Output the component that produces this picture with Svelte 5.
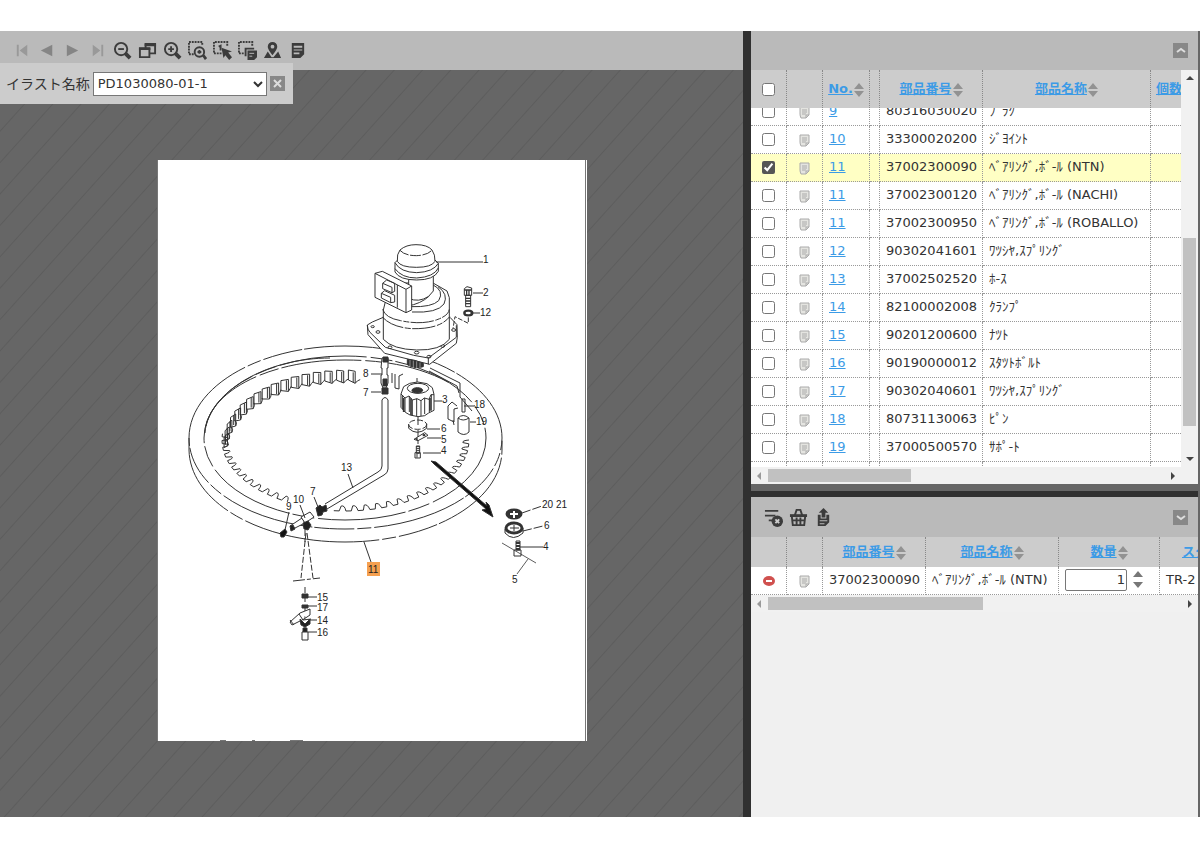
<script>
  import { onMount } from 'svelte';

  let illustration = 'PD1030080-01-1';
  let quantity = 1;
  let scroller;

  let parts = [
    { no: 9, code: '80316030020', name: 'ﾌﾟﾗｸ', checked: false },
    { no: 10, code: '33300020200', name: 'ｼﾞﾖｲﾝﾄ', checked: false },
    { no: 11, code: '37002300090', name: 'ﾍﾞｱﾘﾝｸﾞ,ﾎﾞ-ﾙ (NTN)', checked: true },
    { no: 11, code: '37002300120', name: 'ﾍﾞｱﾘﾝｸﾞ,ﾎﾞ-ﾙ (NACHI)', checked: false },
    { no: 11, code: '37002300950', name: 'ﾍﾞｱﾘﾝｸﾞ,ﾎﾞ-ﾙ (ROBALLO)', checked: false },
    { no: 12, code: '90302041601', name: 'ﾜﾂｼﾔ,ｽﾌﾟﾘﾝｸﾞ', checked: false },
    { no: 13, code: '37002502520', name: 'ﾎ-ｽ', checked: false },
    { no: 14, code: '82100002008', name: 'ｸﾗﾝﾌﾟ', checked: false },
    { no: 15, code: '90201200600', name: 'ﾅﾂﾄ', checked: false },
    { no: 16, code: '90190000012', name: 'ｽﾀﾂﾄﾎﾞﾙﾄ', checked: false },
    { no: 17, code: '90302040601', name: 'ﾜﾂｼﾔ,ｽﾌﾟﾘﾝｸﾞ', checked: false },
    { no: 18, code: '80731130063', name: 'ﾋﾟﾝ', checked: false },
    { no: 19, code: '37000500570', name: 'ｻﾎﾟ-ﾄ', checked: false },
  ];

  // callout numbers on the drawing
  const callouts = [
    ['1', 483, 263], ['2', 483, 296], ['12', 480, 316], ['8', 363, 377],
    ['7', 363, 396], ['3', 442, 403], ['18', 474, 408], ['19', 476, 425],
    ['6', 441, 432], ['5', 441, 443], ['4', 441, 454], ['13', 341, 471],
    ['7', 310, 495], ['10', 293, 503], ['9', 286, 510], ['15', 317, 601],
    ['17', 317, 611], ['14', 317, 624], ['16', 317, 636], ['20 21', 542, 508],
    ['6', 544, 529], ['4', 543, 550], ['5', 512, 583],
  ];

  const at = (deg, rx, ry) => {
    const t = (deg * Math.PI) / 180;
    return [345 + rx * Math.cos(t), 440 + ry * Math.sin(t)].map((v) => v.toFixed(1));
  };

  // scalloped inner gear edge along the ring
  function teeth(from, to, step, rx, ry) {
    let d = 'M' + at(from, rx, ry).join(' ');
    for (let a = from; a < to; a += step) {
      d += 'Q' + at(a + step * 0.1, rx - 7, ry - 6).join(' ') + ' ' + at(a + step * 0.4, rx - 6, ry - 5).join(' ');
      d += 'L' + at(a + step * 0.55, rx, ry).join(' ') + 'L' + at(a + step, rx, ry).join(' ');
    }
    return d;
  }

  // upright faces of the teeth at the back of the ring
  function walls(from, to, step) {
    let d = '';
    for (let a = from; a < to; a += step) {
      const [x1, y1] = at(a, 121, 70);
      const [x2, y2] = at(a + step * 0.6, 118, 69);
      const [x3, y3] = at(a + step, 121, 70);
      d += `M${x1} ${y1}L${x2} ${y2}v12L${x1} ${+y1 + 10}Z`;
      d += `M${x2 - 2} ${+y2 + 1}v10M${x2} ${+y2 + 12}q2-3 ${(x3 - x2).toFixed(1)} ${(y3 - y2 - 3).toFixed(1)}`;
    }
    return d;
  }

  const frontTeeth = teeth(0, 92, 5.6, 124, 71);
  const sideTeeth = teeth(118, 180, 5.6, 123, 70);
  const backTeeth = walls(182, 272, 5.6);

  onMount(() => {
    scroller.scrollTop = 10;
  });
</script>

{#snippet sortIcon()}
  <svg class="sort" viewBox="0 0 10 16" aria-hidden="true"><path d="M0 7l5-6 5 6zM0 9h10l-5 6z" /></svg>
{/snippet}

{#snippet noteIcon()}
  <svg class="note" viewBox="0 0 12 14" aria-hidden="true">
    <path d="M1 2h9v8l-3 3H2q-1-2-1-4z" fill="#e4e4e0" stroke="#aaa" />
    <path d="M3 5h5M3 7h5M3 9h4M7 13v-3h3" stroke="#aaa" fill="none" />
  </svg>
{/snippet}

<div class="viewer">
  <section class="illustration">
    <div class="toolbar">
      <button class="off" aria-label="First"><svg viewBox="0 0 20 20"><path d="M4 4h2v12H4zM15 4v12l-8-6z" /></svg></button>
      <button class="off dim" aria-label="Previous"><svg viewBox="0 0 20 20"><path d="M15 4v12L3 10z" /></svg></button>
      <button class="off dim" aria-label="Next"><svg viewBox="0 0 20 20"><path d="M4 4v12l12-6z" /></svg></button>
      <button class="off" aria-label="Last"><svg viewBox="0 0 20 20"><path d="M14 4h2v12h-2zM5 4v12l8-6z" /></svg></button>
      <button aria-label="Zoom out"><svg class="line" viewBox="0 0 20 20"><circle cx="8.500" cy="8.500" r="6.500" /><path d="M5.500 8.500h6" /><path d="M13 13l5 5" stroke-width="4" /></svg></button>
      <button aria-label="Fit"><svg class="line" viewBox="0 0 20 20"><path d="M2 8h10v9H2zM8 7V3h10v10h-6" /><path d="M7 4h12M1 8h12" stroke-width="3" /></svg></button>
      <button aria-label="Zoom in"><svg class="line" viewBox="0 0 20 20"><circle cx="8.500" cy="8.500" r="6.500" /><path d="M5.500 8.500h6M8.500 5.500v6" /><path d="M13 13l5 5" stroke-width="4" /></svg></button>
      <button aria-label="Zoom area"><svg class="line" viewBox="0 0 20 20"><path d="M6 14H1V1h14v4" stroke-dasharray="2 1" /><circle cx="12" cy="11.500" r="5" /><path d="M10 11.500h4M12 9.500v4" /><path d="M16 15l3 4" stroke-width="3" /></svg></button>
      <button aria-label="Select part"><svg class="line" viewBox="0 0 20 20"><path d="M9 13H1V1h14v5" stroke-dasharray="2 1" /><path d="M6 6l2-1v5" /><path d="M9 7l11 4-4 1 4 5-3 3-4-5-2 3z" fill="#3c3c3c" stroke="none" /></svg></button>
      <button aria-label="Copy area"><svg class="line" viewBox="0 0 20 20"><path d="M6 13H1V1h14v4" stroke-dasharray="2 1" /><path d="M8 16V8h9" /><path d="M10 10h10v7l-3 3h-7z" fill="#3c3c3c" stroke="none" /><path d="M12 13h5M12 16h3" stroke="#bababa" stroke-width="1" /></svg></button>
      <button aria-label="Location"><svg viewBox="0 0 20 20"><path fill-rule="evenodd" d="M10 1a5 5 0 0 1 5 5c0 3-5 9-5 9S5 9 5 6a5 5 0 0 1 5-5zm0 3a2 2 0 1 0 0 4 2 2 0 0 0 0-4z" /><path d="M5 11l-4 7h18l-3-7-5 6H9z" /></svg></button>
      <button aria-label="Notes"><svg viewBox="0 0 20 20"><path fill-rule="evenodd" d="M4 2h13v12l-4 4H4zM6 5v2h9V5zm0 4v1h9V9zm0 3v2h6v-2z" /></svg></button>
    </div>
    <div class="name-bar">
      <label for="illust">イラスト名称</label>
      <select id="illust" bind:value={illustration}>
        <option>PD1030080-01-1</option>
      </select>
      <button class="square" aria-label="Close"><svg viewBox="0 0 15 15"><path d="M4 4l7 7M11 4l-7 7" /></svg></button>
    </div>

    <div class="stage">
      <svg class="paper" viewBox="157 160 430 581" role="img" aria-label="Parts drawing">
        <rect x="157" y="160" width="430" height="581" fill="#fff" />
        <path d="M157.500 160V741M585.500 160V741M220 740.500h6M252 740.500h3M290 740.500h13" stroke="#777" />

        <g class="ink">
          <!-- ring -->
          <path d="M189 438C189 387 259 346 345 346S502 387 502 438S432 529 345 529S189 489 189 438V450C190 502 260 542 345 542S502 502 502 450V438" stroke-dasharray="95 3 14 3 40 2" />
          <ellipse cx="345" cy="438" rx="141" ry="82" stroke-dasharray="88 4 22 3" />
          <path d="M205 433C207 392 268 360 345 360C386 360 420 367 448 382" stroke-dasharray="80 4 20 3" />
          <path d="M206 426C215 388 270 358 330 358" />
          <path d={frontTeeth} />
          <path d={sideTeeth} />
          <path d={backTeeth} />
          <path d="M392 373v10M395 374v14l4 1v-13l4-2M448 406v13l6 3v-13l4-1M448 406l4-4 5 4M453 420l1 5" />

          <!-- hose and fittings -->
          <path d="M382 400V466Q382 470 378 472L325 504M388 400V469Q388 473 384 475L327 509M382 400q3-5 6 0" fill="#fff" />
          <path d="M382 358h6v10h-1v7h1v8l-2 5h-3l-2-5v-8h1v-7h-1z" fill="#fff" />
          <path d="M383 357h5v5h-5zM382 388h6v6h-6zM383 379h4v7h-4z" fill="#333" />
          <path d="M290 526l12-8 3 5-12 6z" fill="#fff" />
          <path d="M301 517l9-5 4 5-9 6z" fill="#fff" />
          <path d="M316 508l4-3 2 2 4-2 1 6-4 1-1 3-4 1zM290 526l3-1 2 4-4 2zM303 523l5-2 3 4-3 5-4-1z" fill="#222" />
          <path d="M280 533l5-4 2 3-3 5h-3z" fill="#111" />
          <path d="M306 533l-5 45M307 533l6 45M305 530v12" stroke-dasharray="6 2" />
          <path d="M293 581l27-3" stroke-dasharray="12 2 4 2" />
          <path d="M305 587v54" stroke-dasharray="6 3" />
          <path d="M302 594h6v4h-6zM302 605h6v3h-6z" fill="#333" />
          <path d="M290 622l10-9 10-4v6l-6 4-12 6zM299 614l4 6 8-1" fill="#fff" />
          <path d="M300 619l5 5 5-5v5l-5 3-4-2zM303 628h4v4h-4z" fill="#222" />
          <path d="M302 632h6v8h-6zM290 620l4 5" fill="#fff" />

          <!-- pin and support -->
          <path d="M429 371l28 15 2 7M430 368l30 15v14l12 14" />
          <path d="M462 399h3v13h-3z" />
          <path d="M458 418q5-5 11 0v14q-5 5-11 0zM458 418q5 4 11 0" fill="#fff" />

          <!-- pinion -->
          <path d="M417 378v6M418 413v12M418 430v14" />
          <g transform="translate(340 340) scale(.3333)" stroke-width="3">
            <path d="M183 162l8-22 18-10 24-4 28 5 16 12 5 20v48l-16 8-12 8-20 3-24-5-14-8-13-15z" fill="#fff" />
            <ellipse cx="234" cy="145" rx="32" ry="15" />
            <ellipse cx="232" cy="151" rx="16" ry="8" fill="#333" />
            <path d="M183 162l12 12 12-6 10 12 14-4 12 6 10-8 14 4 6-14h9M188 166v42M195 174v42M208 168v48M217 180v48M230 176v52M243 182v46M254 174v48M268 178v38M274 164v48" />
            <path d="M191 174v42M213 175v50M270 174v38" stroke-width="5" />
            <path d="M206 252v13q25 24 54 0v-14" /><ellipse cx="233" cy="254" rx="27" ry="14" stroke-dasharray="18 6" />
            <path d="M222 298l32-20 10 8-30 16z" fill="#fff" /><path d="M228 298l5-2M248 286l8-1" stroke-width="6" />
            <path d="M229 318h10v22h-10zM225 338h16v16h-16z" fill="#fff" /><path d="M229 320h10M229 326h10M229 332h10M231 341v12" />
          </g>
          <path d="M431 461l5 1 51 44-1-4 3 3 4 12-11-7 4-1-52-45z" fill="#111" />

          <!-- motor -->
          <g transform="translate(350 230) scale(.3333)" stroke-width="3">
            <path d="M52 285l15-9 33-14h200l21 22 1 38-3 18-80 63-135-33-50-56z" fill="#fff" />
            <path d="M52 285q0 14 8 22l46 45 85 24 44 8 84-62v-36M60 307M235 384v19" />
            <ellipse cx="68" cy="290" rx="5" ry="3" /><ellipse cx="84" cy="306" rx="6" ry="4" /><ellipse cx="120" cy="352" rx="6" ry="4" /><ellipse cx="200" cy="368" rx="7" ry="4" /><ellipse cx="237" cy="380" rx="6" ry="4" /><ellipse cx="278" cy="348" rx="6" ry="4" /><ellipse cx="311" cy="300" rx="6" ry="4" />
            <path d="M100 240v88q28 30 100 32t98-32v-125l-7-20-42-24H120z" fill="#fff" />
            <path d="M98 238q8 26 54 34 65 14 112-4 32-12 34-30M98 262q28 30 88 34 84 2 113-36" stroke-dasharray="70 5 18 4" />
            <path d="M183 230q63 2 83-18 18-30-18-48M186 246q76 4 96-24 14-30-18-52M172 228q40-6 66-30" />
            <path d="M176 145v60q30 14 60-6l14-16v-48z" fill="#fff" />
            <path d="M135 98v28q14 24 65 24t65-26v-24l-10-10-112 0z" fill="#fff" />
            <path d="M135 98q16 29 65 30 50-2 65-28M135 116q20 28 65 28 52-3 65-30" />
            <path d="M142 94q-2-22 8-34 18-16 48-16 34 0 48 16 10 14 9 34-10 18-56 18-47 0-57-18z" fill="#fff" />
            <path d="M150 61q14 16 50 16 35-2 46-17" stroke-dasharray="30 5" />
            <path d="M75 130l22-6 88 44v72l-17 8-93-46z" fill="#fff" />
            <path d="M75 130l93 48v70M168 178l17-10M142 165v68M98 160l12-10 24 10v24l-8 4-28-12zM94 190l10-8 30 14v20l-12 2-28-14zM98 160l28 12v16M94 190l28 12v16" />
            <path d="M172 388l22 3 26 9v10q-25 8-48-6z" fill="#333" />
            <path d="M180 390v18M190 392v22M200 394v20M210 398v16" stroke="#bbb" stroke-width="2" />
            <path d="M343 176l8-6 14 4v22h-22zM347 196h15v34h-15z" fill="#fff" /><path d="M343 180h22M347 205h15M347 213h15M347 221h15M350 180v16M357 180v16" stroke-width="4" />
            <ellipse cx="355" cy="249" rx="12" ry="7" stroke-width="7" />
            <path d="M355 262v18l-40-20-6 36" stroke-dasharray="14 5" />
          </g>

          <!-- bolt set, lower right -->
          <ellipse cx="514" cy="514" rx="7" ry="4" fill="#333" stroke-width="3" />
          <path d="M510 514h8M514 511v7" stroke="#fff" stroke-width="2" />
          <path d="M505 529v4q8 9 18 0v-5" /><ellipse cx="514" cy="528" rx="8" ry="5" stroke-width="3" />
          <path d="M514 525v6M510 528h9M516 541h4v9h-4zM514 550h7v6h-7z" /><path d="M516 543h4M516 546h4M516 549h4" stroke-width="2" />
          <path d="M502 543l34 20M528 559l-11 15" stroke-width=".8" />

          <!-- leader lines -->
          <path d="M436 262h47M473 293h10M470 313h10M371 374h11M371 392h10M434 401h8M464 406h10M470 422h6M427 429h13M427 438h14M423 453h18M348 474l5 14M314 497l4 10M300 505l5 13M289 512l-4 18M308 597h9M308 606h9M308 620h9M308 632h9M519 547h24M364 542l7 20" />
          <path d="M522 513l20-7M523 531l20-5" stroke-dasharray="9 2" />
        </g>

        <rect x="367" y="562" width="13" height="14" fill="#f5a050" />
        <text x="368" y="573">11</text>
        {#each callouts as [label, x, y]}
          <text {x} {y}>{label}</text>
        {/each}
      </svg>
    </div>
  </section>

  <section class="lists">
    <div class="panel parts">
      <div class="toolbar end">
        <button class="square" aria-label="Collapse"><svg viewBox="0 0 15 15"><path d="M4 9l4-3 4 3" /></svg></button>
      </div>
      <div class="with-bar">
        <div class="scroller" bind:this={scroller}>
          <table class="parts-table">
            <colgroup>
              <col class="tick" /><col class="tick" /><col class="no" /><col class="gap" /><col class="code" /><col class="name" /><col class="count" />
            </colgroup>
            <thead>
              <tr>
                <th><input type="checkbox" aria-label="Select all" /></th>
                <th></th>
                <th><a href="#no">No.</a>{@render sortIcon()}</th>
                <th></th>
                <th><a href="#code">部品番号</a>{@render sortIcon()}</th>
                <th><a href="#name">部品名称</a>{@render sortIcon()}</th>
                <th><a href="#count">個数</a>{@render sortIcon()}</th>
              </tr>
            </thead>
            <tbody>
              {#each parts as part}
                <tr class:selected={part.checked}>
                  <td class="mid"><input type="checkbox" aria-label={part.code} bind:checked={part.checked} /></td>
                  <td class="mid">{@render noteIcon()}</td>
                  <td><a href="#part">{part.no}</a></td>
                  <td></td>
                  <td>{part.code}</td>
                  <td>{part.name}</td>
                  <td></td>
                </tr>
              {/each}
              <tr><td></td><td></td><td></td><td></td><td></td><td></td><td></td></tr>
            </tbody>
          </table>
        </div>
        <div class="bar vertical" aria-hidden="true">
          <svg viewBox="0 0 17 17"><path d="M5 10l4-4 4 4z" /></svg>
          <span class="before"></span><span class="thumb"></span><span class="after"></span>
          <svg viewBox="0 0 17 17"><path d="M5 7h8l-4 4z" /></svg>
        </div>
      </div>
      <div class="bar horizontal corner" aria-hidden="true">
        <svg viewBox="0 0 17 17"><path class="pale" d="M10 5v8L6 9z" /></svg>
        <span class="track"><span class="thumb"></span></span>
        <svg viewBox="0 0 17 17"><path d="M7 5v8l4-4z" /></svg>
      </div>
    </div>

    <div class="splitter"></div>

    <div class="panel cart">
      <div class="toolbar">
        <button aria-label="Clear list"><svg class="line" viewBox="0 0 20 20"><path d="M1 3h14M1 8h11M5 13h4" /><circle cx="14" cy="14" r="6" fill="#3c3c3c" stroke="none" /><path d="M12 12l4 4M16 12l-4 4" stroke="#ccc" /></svg></button>
        <button aria-label="Basket"><svg class="line" viewBox="0 0 20 20"><path d="M6 8l2-6h4l2 6" /><path d="M1 8h18" stroke-width="3" /><path d="M3 9l1 9h12l1-9M8 10v7M12 10v7M4 13h12" /></svg></button>
        <button aria-label="Export"><svg viewBox="0 0 20 20"><path fill-rule="evenodd" d="M10 0l5 5h-3v5H8V5H5zM4 7h3v4h6V7h3v8l-4 4H4zm2 6v1h8v-1zm0 3v1h5v-1z" /></svg></button>
        <button class="square push" aria-label="Expand"><svg viewBox="0 0 15 15"><path d="M4 6l4 3 4-3" /></svg></button>
      </div>
      <div class="scroller">
        <table class="cart-table">
          <colgroup>
            <col class="tick" /><col class="tick" /><col class="code" /><col class="cart-name" /><col class="qty" /><col class="model" />
          </colgroup>
          <thead>
            <tr>
              <th></th>
              <th></th>
              <th><a href="#code">部品番号</a>{@render sortIcon()}</th>
              <th><a href="#name">部品名称</a>{@render sortIcon()}</th>
              <th><a href="#qty">数量</a>{@render sortIcon()}</th>
              <th><a href="#model">スタ</a></th>
            </tr>
          </thead>
          <tbody>
            <tr>
              <td class="mid"><button class="remove" aria-label="Remove"><svg viewBox="0 0 12 12"><ellipse cx="6" cy="6" rx="6" ry="5" fill="#d0504e" /><path d="M3 6h6" stroke="#fff" stroke-width="2" /></svg></button></td>
              <td class="mid">{@render noteIcon()}</td>
              <td>37002300090</td>
              <td>ﾍﾞｱﾘﾝｸﾞ,ﾎﾞ-ﾙ (NTN)</td>
              <td>
                <div class="stepper">
                  <input type="text" aria-label="数量" bind:value={quantity} />
                  <div class="steps">
                    <button aria-label="Increase" on:click={() => quantity++}><svg viewBox="0 0 10 6"><path d="M0 6l5-6 5 6z" /></svg></button>
                    <button aria-label="Decrease" on:click={() => quantity--}><svg viewBox="0 0 10 6"><path d="M0 0h10L5 6z" /></svg></button>
                  </div>
                </div>
              </td>
              <td>TR-2</td>
            </tr>
          </tbody>
        </table>
      </div>
      <div class="bar horizontal" aria-hidden="true">
        <svg viewBox="0 0 17 17"><path class="pale" d="M10 5v8L6 9z" /></svg>
        <span class="track"><span class="thumb wide"></span></span>
        <svg viewBox="0 0 17 17"><path d="M7 5v8l4-4z" /></svg>
      </div>
    </div>
  </section>
</div>

<style>
  :global(body) {
    margin: 0;
    background: #fff;
  }

  .viewer {
    display: flex;
    box-sizing: border-box;
    height: calc(100vh - 62px);
    min-height: 680px;
    margin: 31px 0;
    font-family: "DejaVu Sans", "Noto Sans CJK JP", sans-serif;
    font-size: 13px;
    line-height: 20px;
    color: #333;
  }

  .illustration {
    position: relative;
    display: flex;
    flex-direction: column;
    flex: 743 1 0;
    min-width: 0;
  }

  .toolbar {
    display: flex;
    align-items: center;
    flex: none;
    height: 39px;
    padding: 0 10px;
    background: #bababa;
  }

  .toolbar.end {
    justify-content: flex-end;
  }

  button {
    display: flex;
    align-items: center;
    justify-content: center;
    width: 25px;
    height: 25px;
    padding: 0;
    border: 0;
    background: none;
    cursor: pointer;
  }

  button svg {
    width: 19px;
    height: 19px;
    fill: #3c3c3c;
  }

  button svg.line {
    fill: none;
    stroke: #3c3c3c;
    stroke-width: 2;
  }

  button.off svg {
    fill: #999;
  }

  button.dim svg {
    fill: #858585;
  }

  button.square {
    width: 15px;
    height: 15px;
    background: #888;
  }

  button.square svg {
    width: 15px;
    height: 15px;
    fill: none;
    stroke: #ddd;
    stroke-width: 2;
  }

  .push {
    margin-left: auto;
  }

  /* floats over the toolbar edge and the stage */
  .name-bar {
    position: absolute;
    top: 32px;
    left: 0;
    display: flex;
    align-items: center;
    gap: 3px;
    height: 41px;
    padding: 0 8px 0 6px;
    background: #ccc;
  }

  .name-bar label {
    font-size: 14px;
  }

  .name-bar select {
    width: 174px;
    height: 24px;
    padding: 0;
    border: 1px solid #777;
    background: #fff;
    font: inherit;
    color: #333;
  }

  .stage {
    display: flex;
    align-items: center;
    justify-content: center;
    flex: 1;
    min-height: 0;
    padding-top: 14px;
    background: repeating-linear-gradient(132deg, #666 0, #666 19px, #5d5d5d 20px, #666 21px);
  }

  .paper {
    width: 430px;
    max-width: 90%;
  }

  .paper text {
    font-family: "Liberation Sans", sans-serif;
    font-size: 10px;
    fill: #222;
  }

  .ink {
    fill: none;
    stroke: #333;
    stroke-width: 1;
  }

  .lists {
    display: flex;
    flex-direction: column;
    flex: 447 1 0;
    min-width: 0;
    border-left: 8px solid #303030;
    border-right: 2px solid #666;
  }

  .panel {
    display: flex;
    flex-direction: column;
    min-height: 0;
    background: #f0f0f0;
  }

  .parts {
    flex: 453 1 0;
  }

  .cart {
    flex: 320 1 0;
  }

  .cart .toolbar {
    height: 40px;
  }

  .splitter {
    flex: none;
    height: 6px;
    border-top: 7px solid #666;
    background: #303030;
  }

  .with-bar {
    display: flex;
    flex: 1;
    min-height: 0;
  }

  .scroller {
    flex: 1;
    min-width: 0;
    overflow: auto;
    scrollbar-width: none;
  }

  .cart .scroller {
    flex: none;
  }

  table {
    table-layout: fixed;
    border-collapse: separate;
    border-spacing: 0;
    background: #fff;
  }

  .parts-table {
    width: 448px;
  }

  .cart-table {
    width: 509px;
  }

  .tick { width: 36px; }
  .no { width: 47px; }
  .gap { width: 10px; }
  .code { width: 103px; }
  .name { width: 168px; }
  .count { width: 48px; }
  .cart-name { width: 133px; }
  .qty { width: 101px; }
  .model { width: 100px; }

  th {
    position: sticky;
    top: 0;
    box-sizing: border-box;
    height: 38px;
    padding: 0;
    border-right: 1px dotted #888;
    background: #ccc;
    white-space: nowrap;
  }

  .cart-table th {
    height: 30px;
  }

  .cart-table th:last-child {
    padding-left: 22px;
    text-align: left;
  }

  td {
    box-sizing: border-box;
    height: 28px;
    padding: 0 0 2px 6px;
    border-right: 1px dotted #999;
    border-bottom: 1px dotted #999;
    white-space: nowrap;
  }

  td.mid {
    padding: 0;
    text-align: center;
  }

  .selected td {
    background: #ffffc4;
  }

  a {
    color: #3c9be6;
  }

  input[type="checkbox"] {
    display: block;
    width: 13px;
    height: 13px;
    margin: 0 auto;
    accent-color: #555;
  }

  .sort {
    width: 10px;
    height: 16px;
    margin-left: 1px;
    fill: #929292;
    vertical-align: middle;
  }

  .note {
    display: block;
    width: 12px;
    height: 14px;
    margin: 0 auto;
  }

  .remove {
    width: 12px;
    height: 12px;
    margin: 0 auto;
  }

  .remove svg {
    width: 12px;
    height: 12px;
  }

  .stepper {
    display: flex;
    align-items: center;
    gap: 6px;
  }

  .stepper input {
    box-sizing: border-box;
    width: 62px;
    height: 22px;
    padding: 0 1px;
    border: 1px solid #777;
    border-radius: 2px;
    font: inherit;
    color: #333;
    text-align: right;
  }

  .steps {
    display: flex;
    flex-direction: column;
    gap: 5px;
  }

  .steps button,
  .steps svg {
    width: 10px;
    height: 6px;
    fill: #777;
  }

  .bar {
    display: flex;
    flex: none;
    background: #f1f1f1;
  }

  .bar svg {
    flex: none;
    width: 17px;
    height: 17px;
    fill: #444;
  }

  .bar .pale {
    fill: #999;
  }

  .vertical {
    flex-direction: column;
    width: 17px;
  }

  .vertical .before { flex: 151; }
  .vertical .after { flex: 24; }

  .thumb {
    background: #c1c1c1;
  }

  .vertical .thumb {
    flex: 188;
    margin: 0 2px;
  }

  .horizontal {
    height: 17px;
  }

  .corner {
    padding-right: 17px;
  }

  .track {
    display: flex;
    flex: 1;
    padding: 2px 0;
  }

  .track .thumb {
    width: 36%;
  }

  .track .wide {
    width: 52%;
  }
</style>
